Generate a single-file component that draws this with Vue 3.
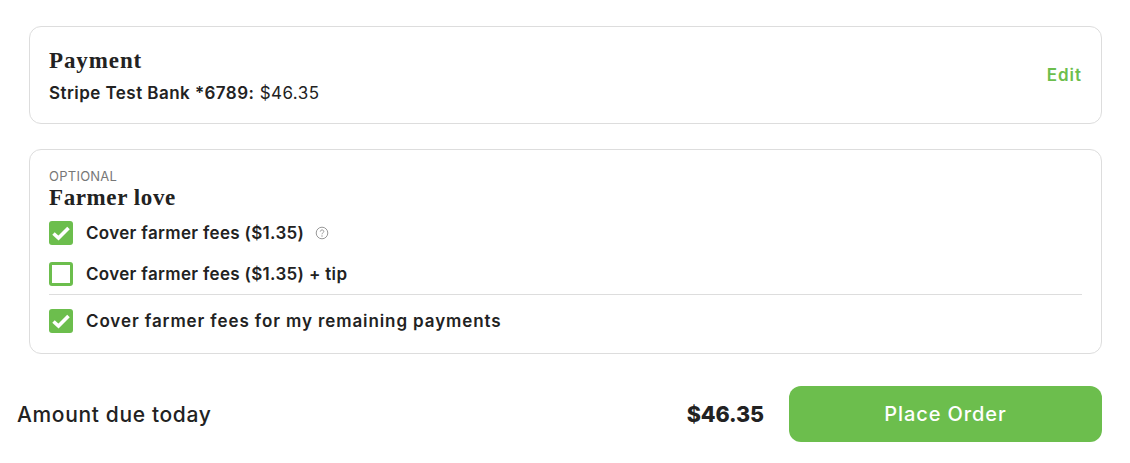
<script setup>
const options = [
  { label: 'Cover farmer fees ($1.35)', checked: true, help: true },
  { label: 'Cover farmer fees ($1.35) + tip', checked: false },
];
</script>

<template>
  <div class="checkout">
    <section class="card payment-card">
      <div>
        <h2 class="card-title">Payment</h2>
        <p class="payment-line"><strong>Stripe Test Bank *6789:</strong> $46.35</p>
      </div>
      <a class="edit-link">Edit</a>
    </section>

    <section class="card love-card">
      <div class="eyebrow">OPTIONAL</div>
      <h2 class="card-title">Farmer love</h2>
      <div class="options">
        <label v-for="option in options" :key="option.label" class="option">
          <span class="box" :class="{ checked: option.checked }">
            <svg v-if="option.checked" viewBox="0 0 24 24" width="24" height="24">
              <path d="M4.5 12.5l5 4.5 10-10" fill="none" stroke="#fff" stroke-width="3.6" />
            </svg>
          </span>
          <span class="option-label">{{ option.label }}</span>
          <svg v-if="option.help" class="help" viewBox="0 0 14 14" width="14" height="14">
            <circle cx="7" cy="7" r="5.8" fill="none" stroke="#999" stroke-width="1" />
            <path d="M5.3 5.6c0-2.2 3.5-2.2 3.5-.1 0 1.3-1.8 1.3-1.8 2.8" fill="none" stroke="#999" stroke-width="1" />
            <circle cx="7" cy="10" r=".7" fill="#999" />
          </svg>
        </label>
      </div>
      <hr class="divider" />
      <label class="option">
        <span class="box checked">
          <svg viewBox="0 0 24 24" width="24" height="24">
            <path d="M4.5 12.5l5 4.5 10-10" fill="none" stroke="#fff" stroke-width="3.6" />
          </svg>
        </span>
        <span class="option-label wide-label">Cover farmer fees for my remaining payments</span>
      </label>
    </section>

    <div class="summary">
      <span class="due-label">Amount due today</span>
      <span class="due-amount">$46.35</span>
      <button class="place-order">Place Order</button>
    </div>
  </div>
</template>

<style>
html, body {
  background: #fff;
}
</style>

<style scoped>
.checkout {
  box-sizing: border-box;
  width: 1130px;
  height: 463px;
  padding: 26px 28px 0 17px;
  font-family: Inter, "Noto Sans", sans-serif;
  color: #222;
}

.card {
  box-sizing: border-box;
  margin-left: 12px;
  background: #fff;
  border: 1px solid #ddd;
  border-radius: 12px;
  padding: 0 19px;
}

.payment-card {
  display: flex;
  align-items: center;
  justify-content: space-between;
  height: 98px;
}

.card-title {
  margin: 1px 0 0;
  font-family: "Liberation Serif", serif;
  font-size: 23px;
  font-weight: 700;
  line-height: 28px;
  letter-spacing: 0.9px;
}

.payment-line {
  margin: 6px 0 0;
  font-size: 17px;
  line-height: 24px;
  letter-spacing: 0.45px;
}

.payment-line strong {
  font-weight: 600;
}

.edit-link {
  font-size: 17px;
  font-weight: 600;
  letter-spacing: 1px;
  color: #6cbe4d;
}

.love-card {
  height: 205px;
  margin-top: 25px;
  padding-top: 18px;
}

.eyebrow {
  font-size: 13px;
  line-height: 16px;
  letter-spacing: 0.25px;
  color: #777;
}

.love-card .card-title {
  line-height: 26px;
  letter-spacing: 0.6px;
}

.options {
  display: flex;
  flex-direction: column;
  gap: 17px;
  margin-top: 10px;
}

.option {
  display: flex;
  align-items: center;
  height: 24px;
}

.box {
  box-sizing: border-box;
  width: 24px;
  height: 24px;
  flex: none;
  border: 3px solid #6cbe4d;
  border-radius: 3px;
  background: #fff;
}

.box.checked {
  border: 0;
  background: #6cbe4d;
}

.box svg {
  display: block;
}

.option-label {
  margin-left: 13px;
  font-size: 17px;
  font-weight: 600;
  letter-spacing: 0.33px;
}

.wide-label {
  letter-spacing: 0.9px;
}

.help {
  margin-left: 11px;
}

.divider {
  margin: 8px 0 14px;
  border: 0;
  border-top: 1px solid #ddd;
}

.summary {
  display: flex;
  align-items: center;
  height: 56px;
  margin-top: 32px;
}

.due-label {
  flex: 1;
  font-size: 21px;
  font-weight: 500;
  letter-spacing: 0.65px;
}

.due-amount {
  margin-right: 25px;
  font-size: 21.5px;
  font-weight: 800;
  letter-spacing: -0.1px;
}

.place-order {
  width: 313px;
  height: 56px;
  border: 0;
  border-radius: 12px;
  background: #6cbe4d;
  color: #fff;
  font-family: inherit;
  font-size: 20px;
  font-weight: 500;
  letter-spacing: 0.9px;
}
</style>
